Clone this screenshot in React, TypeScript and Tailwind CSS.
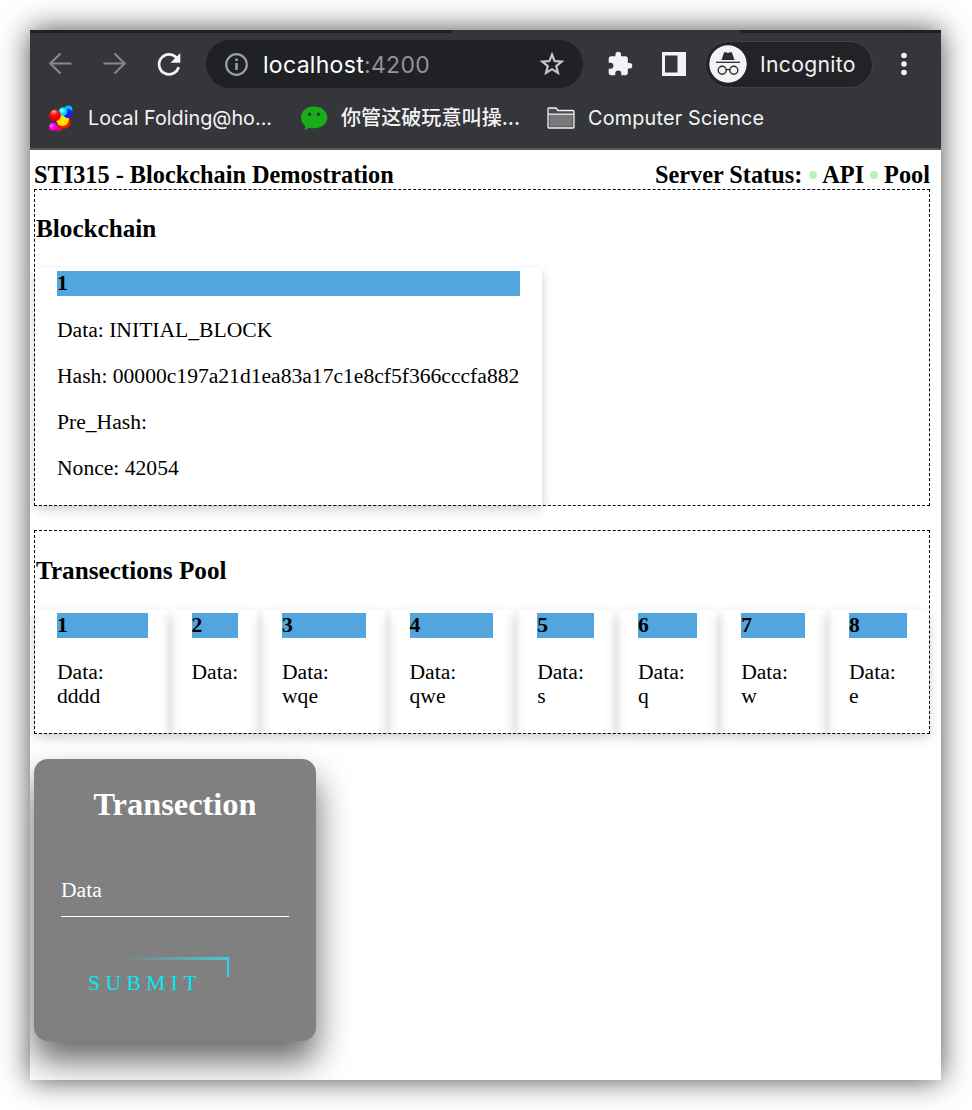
import React from "react";

type PoolItem = { id: number; data: string; width: string };

const pool: PoolItem[] = [
  { id: 1, data: "dddd", width: "w-[134.5px]" },
  { id: 2, data: "", width: "w-[90.5px]" },
  { id: 3, data: "wqe", width: "w-[127.5px]" },
  { id: 4, data: "qwe", width: "w-[127.7px]" },
  { id: 5, data: "s", width: "w-[100.8px]" },
  { id: 6, data: "q", width: "w-[103.2px]" },
  { id: 7, data: "w", width: "w-[107.8px]" },
  { id: 8, data: "e", width: "w-[102px]" },
];

function Toolbar() {
  return (
    <div className="flex h-[62px] shrink-0 items-center">
      <svg className="ml-[18px] shrink-0" width="24" height="24" viewBox="0 0 24 24" fill="none" stroke="#89898b" strokeWidth="2.1">
        <path d="M23.5 11.500H2.5M12.5 1.500L2.3 11.500l10.2 10" />
      </svg>
      <svg className="ml-[31px] shrink-0" width="24" height="24" viewBox="0 0 24 24" fill="none" stroke="#89898b" strokeWidth="2.1">
        <path d="M.5 11.500h21M11.500 1.500l10.200 10-10.200 10" />
      </svg>
      <svg className="ml-[29px] shrink-0" width="26" height="26" viewBox="0 0 26 26" fill="none">
        <path d="M20.600 6.800A10 10 0 1 0 22.700 16.200" stroke="#f3f4f5" strokeWidth="2.700" />
        <path d="M24.300 2v9.800h-9.800z" fill="#f3f4f5" />
      </svg>
      <div className="ml-[24px] flex h-[48px] w-[377px] shrink-0 items-center rounded-full bg-[#202124] pl-[18px] pr-[18px]">
        <svg className="shrink-0" width="24" height="24" viewBox="0 0 24 24" fill="none" stroke="#9aa0a6" strokeWidth="2.200">
          <circle cx="12.500" cy="12.500" r="10.300" />
          <path d="M12.500 11v7M12.500 6.500v2.500" strokeWidth="2.600" />
        </svg>
        <span className="ml-[15px] pt-[2px] font-['Inter'] text-[23px] leading-none tracking-[0.3px] text-white">
          localhost<span className="text-[#929395]">:4200</span>
        </span>
        <svg className="ml-auto shrink-0" width="26" height="26" viewBox="0 0 26 26" fill="none" stroke="#c9cacc" strokeWidth="2.100">
          <path d="M13 3.500l2.600 6.600 7.100.5-5.500 4.500 1.800 6.900-6-3.800-6 3.800 1.800-6.900-5.500-4.500 7.100-.5z" />
        </svg>
      </div>
      <svg className="ml-[23px] shrink-0" width="27" height="27" viewBox="0 0 24 24" fill="#f1f3f4">
        <path d="M20.900 10.600H19.400V6.600c0-1.100-.9-2-2-2h-4V3.100a2.500 2.500 0 0 0-5 0V4.600H4.400c-1.100 0-2 .9-2 2v3.800h1.500a2.700 2.700 0 0 1 0 5.400H2.400V19.600c0 1.100.9 2 2 2h3.800v-1.500a2.700 2.700 0 0 1 5.400 0V21.600H17.400c1.100 0 2-.9 2-2v-4h1.500a2.500 2.500 0 0 0 0-5z" />
      </svg>
      <svg className="ml-[29px] shrink-0" width="24" height="24" viewBox="0 0 24 24">
        <path fillRule="evenodd" d="M0 0h24v24H0zM3 3.500h12.500v17H3z" fill="#f1f3f4" />
      </svg>
      <div className="ml-[19px] flex h-[47px] w-[168px] shrink-0 items-center rounded-full border border-[#424347] bg-[#232227] pl-[3px]">
        <svg className="shrink-0" width="38" height="38" viewBox="0 0 38 38" fill="none">
          <circle cx="19" cy="19" r="18.700" fill="#f1f3f4" />
          <path d="M12.500 15l2.400-7q.4-1.200 1.700-.8l2.400.8 2.400-.8q1.300-.4 1.700.8l2.400 7z" fill="#292a2d" />
          <path d="M7 17.300h24" stroke="#292a2d" strokeWidth="1.300" />
          <g stroke="#292a2d" strokeWidth="1.400">
            <circle cx="13.200" cy="25.200" r="4" />
            <circle cx="24.800" cy="25.200" r="4" />
            <path d="M17.200 25q1.800-1.200 3.600 0" />
          </g>
        </svg>
        <span className="ml-[13px] pt-[2px] font-['Inter'] text-[21.2px] leading-none tracking-[0.3px] text-[#f1f3f4]">Incognito</span>
      </div>
      <svg className="ml-[27px] shrink-0" width="8" height="24" viewBox="0 0 8 24" fill="#f1f3f4">
        <circle cx="4" cy="3.500" r="2.800" />
        <circle cx="4" cy="12" r="2.800" />
        <circle cx="4" cy="20.500" r="2.800" />
      </svg>
    </div>
  );
}

function FoldingIcon() {
  return (
    <svg className="shrink-0" width="24" height="27" viewBox="0 0 24 27">
      <defs>
        <radialGradient id="redBall" cx=".4" cy=".15"><stop stopColor="#ffb0a0" /><stop offset=".5" stopColor="#ff3020" /><stop offset="1" stopColor="#f00000" /></radialGradient>
        <radialGradient id="cyanBall" cx=".4" cy=".4"><stop stopColor="#b8ffff" /><stop offset=".6" stopColor="#00e8ff" /><stop offset="1" stopColor="#00cfff" /></radialGradient>
        <radialGradient id="pinkBall" cx=".35" cy=".4"><stop stopColor="#ff9cff" /><stop offset=".6" stopColor="#ff00f0" /><stop offset="1" stopColor="#ff00c8" /></radialGradient>
      </defs>
      <circle cx="19.500" cy="4.500" r="3.900" fill="#00bfff" />
      <circle cx="10" cy="22.500" r="3.500" fill="#f00078" />
      <circle cx="15" cy="17" r="6.800" fill="#f01800" />
      <circle cx="13.500" cy="14.800" r="6.200" fill="#ffe600" />
      <circle cx="18.800" cy="8.500" r="4.600" fill="#1520f5" />
      <circle cx="14" cy="6.500" r="4.300" fill="url(#cyanBall)" />
      <circle cx="6" cy="10.500" r="5.800" fill="url(#redBall)" />
      <circle cx="3.900" cy="21.700" r="3.900" fill="url(#pinkBall)" />
    </svg>
  );
}

function Bookmarks() {
  return (
    <div className="flex h-[53px] shrink-0 items-center pl-[19px] pb-[7px] font-['Inter','Noto_Sans_CJK_SC',sans-serif] text-[19.8px] leading-none text-[#f4f4f5]">
      <FoldingIcon />
      <span className="ml-[15px] w-[212px] shrink-0 pt-[1px] whitespace-nowrap">Local Folding@ho...</span>
      <svg className="shrink-0" width="28" height="26" viewBox="0 0 28 26">
        <path d="M14 1.500C6.500 1.500 1 6.300 1 12.500c0 3.600 1.500 6.300 4.200 8.300L4.600 25l4.700-2.300c1.500.4 3 .6 4.700.6 7.500 0 13.300-4.600 13.300-10.800S21.500 1.500 14 1.500z" fill="#1aad19" />
        <circle cx="9.500" cy="9.300" r="1.700" fill="#21402b" />
        <circle cx="18.500" cy="9.300" r="1.700" fill="#21402b" />
      </svg>
      <span className="ml-[13px] w-[206px] shrink-0 whitespace-nowrap text-[20.1px] font-medium">你管这破玩意叫操...</span>
      <svg className="shrink-0" width="28" height="22" viewBox="0 0 28 22" fill="none" stroke="#f1f3f4" strokeWidth="1.300">
        <path d="M1 20V2q0-1 1-1h7l2 2.500h15q1 0 1 1V20q0 1-1 1H2q-1 0-1-1z" fill="#4a4b4e" />
        <path d="M2.500 8h23v11.500h-23z" fill="#77787a" stroke="none" />
        <path d="M1 7.200h26" />
      </svg>
      <span className="ml-[13px] pt-[1px] whitespace-nowrap tracking-[0.2px]">Computer Science</span>
    </div>
  );
}

function Block({ id, width, children }: { id: number; width: string; children: React.ReactNode }) {
  return (
    <div className={`${width} shrink-0 px-[22px] pt-[3px] pb-[3px] shadow-[0_5.400px_10.800px_0_rgba(0,0,0,0.2)]`}>
      <h4 className="h-[24.6px] bg-[#52a6dd] text-[21.6px] leading-[24.4px] font-bold">{id}</h4>
      {children}
    </div>
  );
}

export default function App() {
  return (
    <div className="h-[1110px] w-[972px] overflow-hidden bg-white p-[30px]">
      <div className="flex h-[1050px] w-[911px] flex-col bg-[#35363a] shadow-[0_0_28px_rgba(0,0,0,0.7)]">
        <div className="flex h-[3px] shrink-0 justify-between">
          <div className="h-full w-[423px] rounded-br-[3px] bg-[#202124]" />
          <div className="h-full w-[201px] rounded-bl-[3px] bg-[#202124]" />
        </div>
        <Toolbar />
        <Bookmarks />
        <div className="min-h-0 flex-1 overflow-hidden border-t-2 border-[#55565a] bg-white font-['Liberation_Serif',serif] text-[21.6px] leading-[24.5px] text-black">
          <div className="ml-[4px] w-[896px] pt-[11px]">
            <header className="flex h-[28px] items-center justify-between text-[24.3px] leading-[28px] font-bold">
              <h3>STI315 - Blockchain Demostration</h3>
              <div className="flex items-center whitespace-nowrap">
                Server Status:
                <span className="ml-[7px] mr-[5px] size-[8px] rounded-full bg-[#b5f4b6]" />
                API
                <span className="ml-[6px] mr-[6px] size-[8px] rounded-full bg-[#b5f4b6]" />
                Pool
              </div>
            </header>
            <section className="h-[317px] border border-dashed border-black">
              <h3 className="mt-[25px] ml-[1px] mb-[25px] text-[25.2px] leading-[28px] font-bold">Blockchain</h3>
              <div className="flex h-[237px]">
                <Block id={1} width="w-[507px]">
                  <p className="mt-[22.2px]">Data: INITIAL_BLOCK</p>
                  <p className="mt-[21.7px] whitespace-nowrap">Hash: 00000c197a21d1ea83a17c1e8cf5f366cccfa882</p>
                  <p className="mt-[21.6px]">Pre_Hash:</p>
                  <p className="mt-[21.6px]">Nonce: 42054</p>
                </Block>
              </div>
            </section>
            <section className="mt-[24px] h-[204px] border border-dashed border-black">
              <h3 className="mt-[26px] ml-[1px] mb-[25px] text-[25.2px] leading-[28px] font-bold">Transections Pool</h3>
              <div className="flex h-[123px]">
                {pool.map((item) => (
                  <Block key={item.id} id={item.id} width={item.width}>
                    <p className="mt-[22.2px]">Data:<br />{item.data}</p>
                  </Block>
                ))}
              </div>
            </section>
            <form className="mt-[25px] flex h-[282px] w-[282px] flex-col rounded-[14px] bg-[#808080] px-[27px] shadow-[0_20px_34px_rgba(0,0,0,0.6)]">
              <h2 className="mt-[27px] text-center text-[32.4px] leading-[37px] font-bold text-white">Transection</h2>
              <label className="mt-[55px] h-[39px] border-b border-white text-[21.6px] leading-[24px] text-white">Data</label>
              <div className="relative mt-[41px] h-[54px] w-[168px] pt-[13px] pl-[27px] text-[21.6px] tracking-[5.4px] text-[#03e9f4]">
                SUBMIT
                <span className="absolute -top-px right-0 h-[3px] w-[105px] bg-gradient-to-r from-transparent to-[#44cbd4]" />
                <span className="absolute -top-px right-0 h-[20px] w-[2px] bg-[#25dae5]" />
              </div>
            </form>
          </div>
        </div>
      </div>
    </div>
  );
}
